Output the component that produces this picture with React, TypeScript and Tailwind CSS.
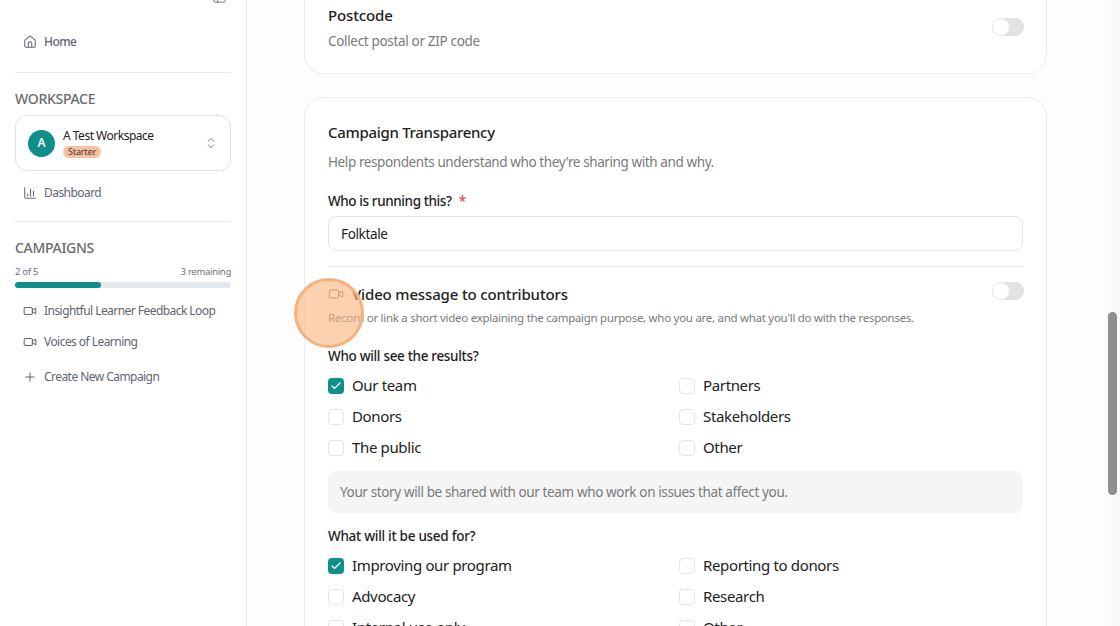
import { Check, ChartColumn, ChevronsUpDown, House, PanelLeft, Plus, Video } from "lucide-react";

const FONT = "font-['Noto_Sans',sans-serif]";

function Toggle() {
  return (
    <span className="flex h-[18px] w-8 shrink-0 items-center rounded-full bg-[#e2e2e2]">
      <span className="h-[18px] w-[18px] rounded-full border border-[#e8e8e8] bg-white" />
    </span>
  );
}

function CheckRow({ label, checked }: { label: string; checked?: boolean }) {
  return (
    <div className="flex h-[31px] items-center gap-2">
      {checked ? (
        <span className="flex h-4 w-4 items-center justify-center rounded-[4px] bg-[#0f8f8a]">
          <Check className="h-3 w-3 text-white" strokeWidth={2.5} />
        </span>
      ) : (
        <span className="h-4 w-4 rounded-[4px] border border-[#e5e5e5] bg-white" />
      )}
      <span className="text-[15px] tracking-[-0.35px] text-[#222]">{label}</span>
    </div>
  );
}

function NavItem({ icon, label, className }: { icon: React.ReactNode; label: string; className?: string }) {
  return (
    <div className={`flex items-center gap-[7px] whitespace-nowrap pl-[8px] text-[12px] tracking-[-0.55px] text-[#5f6673] ${className ?? ""}`}>
      {icon}
      <span>{label}</span>
    </div>
  );
}

function Sidebar() {
  return (
    <aside className="h-[626px] w-[247px] shrink-0 overflow-hidden border-r border-[#ececec] bg-white px-[15px]">
      <div className="-mt-[11px] flex justify-end pr-[4px]">
        <PanelLeft className="h-[15px] w-[15px] text-[#6b7280]" strokeWidth={1.5} />
      </div>
      <NavItem className="mt-[28px] h-[20px] font-medium" icon={<House className="h-[14px] w-[14px]" strokeWidth={1.75} />} label="Home" />
      <div className="mt-[20px] h-px bg-[#e8eaed]" />
      <div className="mt-[16px] text-[14px] font-medium leading-[20px] tracking-[-0.3px] text-[#6b6b6b]">WORKSPACE</div>
      <div className="mt-[6px] flex h-[56px] items-center rounded-xl border border-[#dfe2e6] bg-white pl-[12px] pr-[12px]">
        <span className="flex h-[27px] w-[27px] shrink-0 items-center justify-center rounded-full bg-[#0f8f8a] text-[12px] font-semibold text-white">A</span>
        <div className="ml-2 flex-1">
          <div className="text-[12px] leading-[16px] tracking-[-0.5px] text-[#222]">A Test Workspace</div>
          <span className="mt-[2px] block w-fit rounded-full bg-[#f8bfa3] px-[5px] text-[9px] font-medium leading-[12px] tracking-[-0.25px] text-[#5b4a3f]">Starter</span>
        </div>
        <ChevronsUpDown className="h-[14px] w-[14px] text-[#6b7280]" strokeWidth={1.5} />
      </div>
      <NavItem className="mt-[12px] h-[20px]" icon={<ChartColumn className="h-[14px] w-[14px]" strokeWidth={1.75} />} label="Dashboard" />
      <div className="mt-[18px] h-px bg-[#e8eaed]" />
      <div className="mt-[16px] text-[14px] font-medium leading-[20px] tracking-[-0.3px] text-[#6b6b6b]">CAMPAIGNS</div>
      <div className="mt-[7px] flex justify-between text-[9.5px] leading-[14px] tracking-[-0.3px] text-[#6b7280]">
        <span>2 of 5</span>
        <span>3 remaining</span>
      </div>
      <div className="mt-[3px] h-[6px] rounded-full bg-[#e3e8ee]">
        <div className="h-full w-[40%] rounded-full bg-[#0f8f8a]" />
      </div>
      <NavItem className="mt-[13px] h-[20px]" icon={<Video className="h-[14px] w-[14px]" strokeWidth={1.75} />} label="Insightful Learner Feedback Loop" />
      <NavItem className="mt-[11px] h-[20px]" icon={<Video className="h-[14px] w-[14px]" strokeWidth={1.75} />} label="Voices of Learning" />
      <NavItem className="mt-[15px] h-[20px]" icon={<Plus className="h-[14px] w-[14px]" strokeWidth={1.75} />} label="Create New Campaign" />
    </aside>
  );
}

function Main() {
  return (
    <main className="h-[626px] flex-1 overflow-hidden bg-[#fdfdfd] pl-[57px]">
      <section className="-mt-[20px] flex h-[94px] w-[743px] items-start justify-between rounded-[20px] border border-[#ececec] bg-white px-[23px] pt-[22px]">
        <div>
          <div className="text-[15px] font-medium leading-[24px] tracking-[-0.15px] text-[#222]">Postcode</div>
          <div className="mt-[2px] text-[13.5px] leading-[24px] tracking-[-0.33px] text-[#7a7a7a]">Collect postal or ZIP code</div>
        </div>
        <div className="-mr-px mt-[15px]">
          <Toggle />
        </div>
      </section>

      <section className="mt-[23px] w-[743px] rounded-[20px] border border-[#ececec] bg-white px-[23px] pb-8 pt-[22px]">
        <div className="text-[15px] font-medium leading-[24px] tracking-[-0.3px] text-[#222]">Campaign Transparency</div>
        <div className="mt-[6px] text-[13.5px] leading-[24px] tracking-[-0.4px] text-[#7a7a7a]">Help respondents understand who they're sharing with and why.</div>
        <div className="mt-[17px] text-[13.5px] font-medium leading-[20px] tracking-[-0.4px] text-[#222]">
          Who is running this? <span className="ml-1 text-[#e5484d]">*</span>
        </div>
        <div className="mt-[5px] flex h-[35px] items-center rounded-lg border border-[#e5e5e5] bg-white px-3 pt-[2px] text-[13.5px] tracking-[-0.35px] text-[#222]">Folktale</div>
        <div className="mt-[15px] h-px bg-[#e8e8e8]" />

        <div className="mt-[15px] flex items-start justify-between">
          <div className="flex h-[24px] items-center gap-2">
            <Video className="h-4 w-4 text-[#7a7a7a]" strokeWidth={1.5} />
            <span className="text-[15px] font-medium tracking-[-0.15px] text-[#222]">Video message to contributors</span>
          </div>
          <div className="-mr-px">
            <Toggle />
          </div>
        </div>
        <div className="mt-[3px] whitespace-nowrap text-[11.5px] leading-[18px] tracking-[-0.28px] text-[#7a7a7a]">
          Record or link a short video explaining the campaign purpose, who you are, and what you'll do with the responses.
        </div>

        <div className="mt-[19px] text-[13.5px] font-medium leading-[20px] tracking-[-0.32px] text-[#222]">Who will see the results?</div>
        <div className="mt-[4px] grid grid-cols-2 gap-x-[7px]">
          <CheckRow label="Our team" checked />
          <CheckRow label="Partners" />
          <CheckRow label="Donors" />
          <CheckRow label="Stakeholders" />
          <CheckRow label="The public" />
          <CheckRow label="Other" />
        </div>
        <div className="mt-[8px] flex h-[42px] items-center rounded-lg bg-[#f5f5f5] px-3 text-[13.5px] tracking-[-0.37px] text-[#7a7a7a]">
          Your story will be shared with our team who work on issues that affect you.
        </div>

        <div className="mt-[13px] text-[13.5px] font-medium leading-[20px] tracking-[-0.28px] text-[#222]">What will it be used for?</div>
        <div className="mt-[4px] grid grid-cols-2 gap-x-[7px]">
          <CheckRow label="Improving our program" checked />
          <CheckRow label="Reporting to donors" />
          <CheckRow label="Advocacy" />
          <CheckRow label="Research" />
          <CheckRow label="Internal use only" />
          <CheckRow label="Other" />
        </div>
      </section>
    </main>
  );
}

export default function App() {
  return (
    <div className={`relative flex h-[626px] w-[1120px] overflow-hidden bg-white ${FONT}`}>
      <Sidebar />
      <Main />
      {/* scrollbar */}
      <div className="absolute right-0 top-0 h-full w-[15px] bg-[#fafafa]">
        <div className="absolute left-[3px] top-[312px] h-[183px] w-[9px] rounded-full bg-[#8f8f8f]" />
      </div>
      {/* click highlight */}
      <div className="pointer-events-none absolute left-[294px] top-[278px] h-[70px] w-[70px] rounded-full border-[3px] border-[#f5b27e] bg-[#f9b27c]/60" />
    </div>
  );
}
